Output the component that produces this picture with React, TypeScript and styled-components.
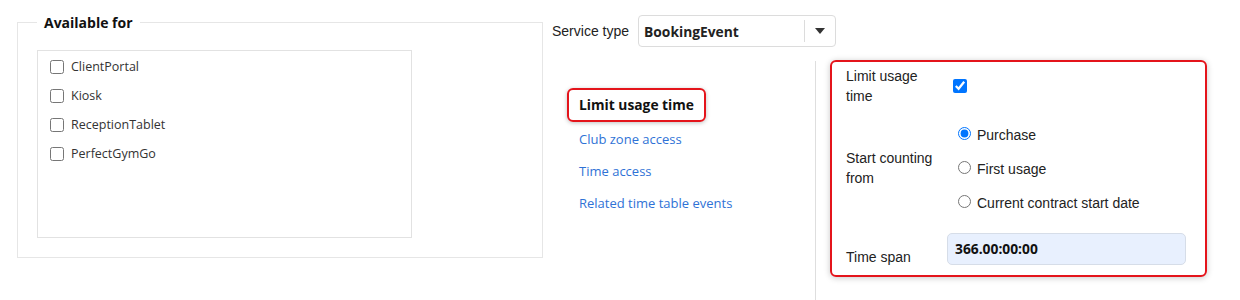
import styled, { createGlobalStyle } from 'styled-components';

const GlobalStyle = createGlobalStyle`
  body {
    margin: 0;
    background: #fff;
    font-family: 'Liberation Sans', Arial, sans-serif;
    color: #222;
  }
`;

const Page = styled.div`
  display: flex;
  align-items: flex-start;
  width: 1240px;
  height: 300px;
  overflow: hidden;
`;

const AvailableBox = styled.fieldset`
  margin: 13px 0 0 17px;
  padding: 0 0 18px 19px;
  width: 526px;
  height: 245px;
  box-sizing: border-box;
  border: 1px solid #e6e6e6;
`;

const Legend = styled.legend`
  padding: 0 7px;
  margin-left: 0;
  font-family: 'Open Sans', sans-serif;
  font-size: 14px;
  font-weight: 700;
  color: #111;
`;

const ChannelList = styled.div`
  margin-top: 18px;
  width: 375px;
  height: 188px;
  box-sizing: border-box;
  border: 1px solid #e2e2e2;
  padding: 1px 0 0 12px;
  display: flex;
  flex-direction: column;
`;

const ChannelRow = styled.label`
  display: flex;
  align-items: center;
  gap: 7px;
  height: 29px;
  font-family: 'Open Sans', sans-serif;
  font-size: 12.5px;
  color: #333;
`;

const Box = styled.input`
  width: 14px;
  height: 14px;
  margin: 0;
  accent-color: #0075ff;
`;

const RightSide = styled.div`
  margin-left: 9px;
  display: flex;
  flex-direction: column;
`;

const TypeRow = styled.div`
  margin-top: 15px;
  display: flex;
  align-items: center;
  gap: 9px;
  font-size: 14px;
`;

const Select = styled.div`
  width: 198px;
  height: 32px;
  box-sizing: border-box;
  border: 1px solid #dcdcdc;
  border-radius: 4px;
  display: flex;
  align-items: center;
`;

const SelectValue = styled.span`
  flex: 1;
  padding-left: 5px;
  font-family: 'Open Sans', sans-serif;
  font-size: 13.8px;
  font-weight: 700;
  color: #222;
`;

const SelectArrow = styled.span`
  width: 30px;
  height: 22px;
  border-left: 1px solid #dcdcdc;
  display: flex;
  align-items: center;
  justify-content: center;
`;

const Body = styled.div`
  display: flex;
  margin-top: 14px;
`;

const Nav = styled.nav`
  width: 264px;
  padding: 27px 0 0 15px;
  box-sizing: border-box;
  border-right: 1px solid #dedede;
  height: 240px;
  display: flex;
  flex-direction: column;
  align-items: flex-start;
`;

const NavItem = styled.a<{ $active?: boolean }>`
  padding: 7px 10px;
  border: 2px solid ${(p) => (p.$active ? '#e4141b' : 'transparent')};
  border-radius: 6px;
  box-shadow: ${(p) => (p.$active ? '0 1px 4px rgba(0,0,0,0.25)' : 'none')};
  font-family: 'Open Sans', sans-serif;
  font-size: ${(p) => (p.$active ? '13.8px' : '13px')};
  font-weight: ${(p) => (p.$active ? 700 : 400)};
  color: ${(p) => (p.$active ? '#111' : '#2f72d6')};
  line-height: 16px;
  margin-bottom: ${(p) => (p.$active ? '0' : '-2px')};
`;

const Panel = styled.div`
  margin: -1px 0 0 14px;
  width: 377px;
  height: 217px;
  box-sizing: border-box;
  border: 2px solid #e4141b;
  border-radius: 6px;
  box-shadow: 0 1px 6px rgba(0, 0, 0, 0.22);
  padding: 4px 19px 0 14px;
  display: grid;
  grid-template-columns: 101px 1fr;
  grid-template-rows: 40px auto auto;
  align-content: start;
  font-size: 14px;
  color: #222;
`;

const FieldLabel = styled.div<{ $top?: string }>`
  line-height: 20px;
  align-self: ${(p) => (p.$top ? 'start' : 'center')};
  padding: ${(p) => p.$top || '0'} 4px 0 0;
`;

const FieldValue = styled.div<{ $pad?: string }>`
  display: flex;
  flex-direction: column;
  justify-content: center;
  padding: ${(p) => p.$pad || '0'};
`;

const RadioRow = styled.label`
  display: flex;
  align-items: center;
  gap: 6px;
  height: 34px;
`;

const Radio = styled.input`
  width: 13px;
  height: 13px;
  margin: 0 0 4px 0;
  accent-color: #0075ff;
`;

const SpanInput = styled.div`
  width: 239px;
  height: 32px;
  box-sizing: border-box;
  background: #e8f0fe;
  border: 1px solid #d6dde8;
  border-radius: 5px;
  padding-left: 7px;
  display: flex;
  align-items: center;
  font-family: 'Open Sans', sans-serif;
  font-size: 13.8px;
  font-weight: 700;
  color: #111;
`;

const channels = ['ClientPortal', 'Kiosk', 'ReceptionTablet', 'PerfectGymGo'];
const links = ['Club zone access', 'Time access', 'Related time table events'];
const starts = ['Purchase', 'First usage', 'Current contract start date'];

export default function App() {
  return (
    <>
      <GlobalStyle />
      <Page>
        <AvailableBox>
          <Legend>Available for</Legend>
          <ChannelList>
            {channels.map((c) => (
              <ChannelRow key={c}>
                <Box type="checkbox" />
                {c}
              </ChannelRow>
            ))}
          </ChannelList>
        </AvailableBox>

        <RightSide>
          <TypeRow>
            Service type
            <Select>
              <SelectValue>BookingEvent</SelectValue>
              <SelectArrow>
                <svg width="10" height="6" viewBox="0 0 10 6">
                  <path d="M0 0h10L5 6z" fill="#333" />
                </svg>
              </SelectArrow>
            </Select>
          </TypeRow>

          <Body>
            <Nav>
              <NavItem $active>Limit usage time</NavItem>
              {links.map((l) => (
                <NavItem key={l}>{l}</NavItem>
              ))}
            </Nav>

            <Panel>
              <FieldLabel>Limit usage time</FieldLabel>
              <FieldValue $pad="0 0 0 6px">
                <Box type="checkbox" defaultChecked />
              </FieldValue>

              <FieldLabel>Start counting from</FieldLabel>
              <FieldValue $pad="12px 0 10px 11px">
                {starts.map((s, i) => (
                  <RadioRow key={s}>
                    <Radio type="radio" name="start" defaultChecked={i === 0} />
                    {s}
                  </RadioRow>
                ))}
              </FieldValue>

              <FieldLabel $top="17px">Time span</FieldLabel>
              <FieldValue>
                <SpanInput>366.00:00:00</SpanInput>
              </FieldValue>
            </Panel>
          </Body>
        </RightSide>
      </Page>
    </>
  );
}
